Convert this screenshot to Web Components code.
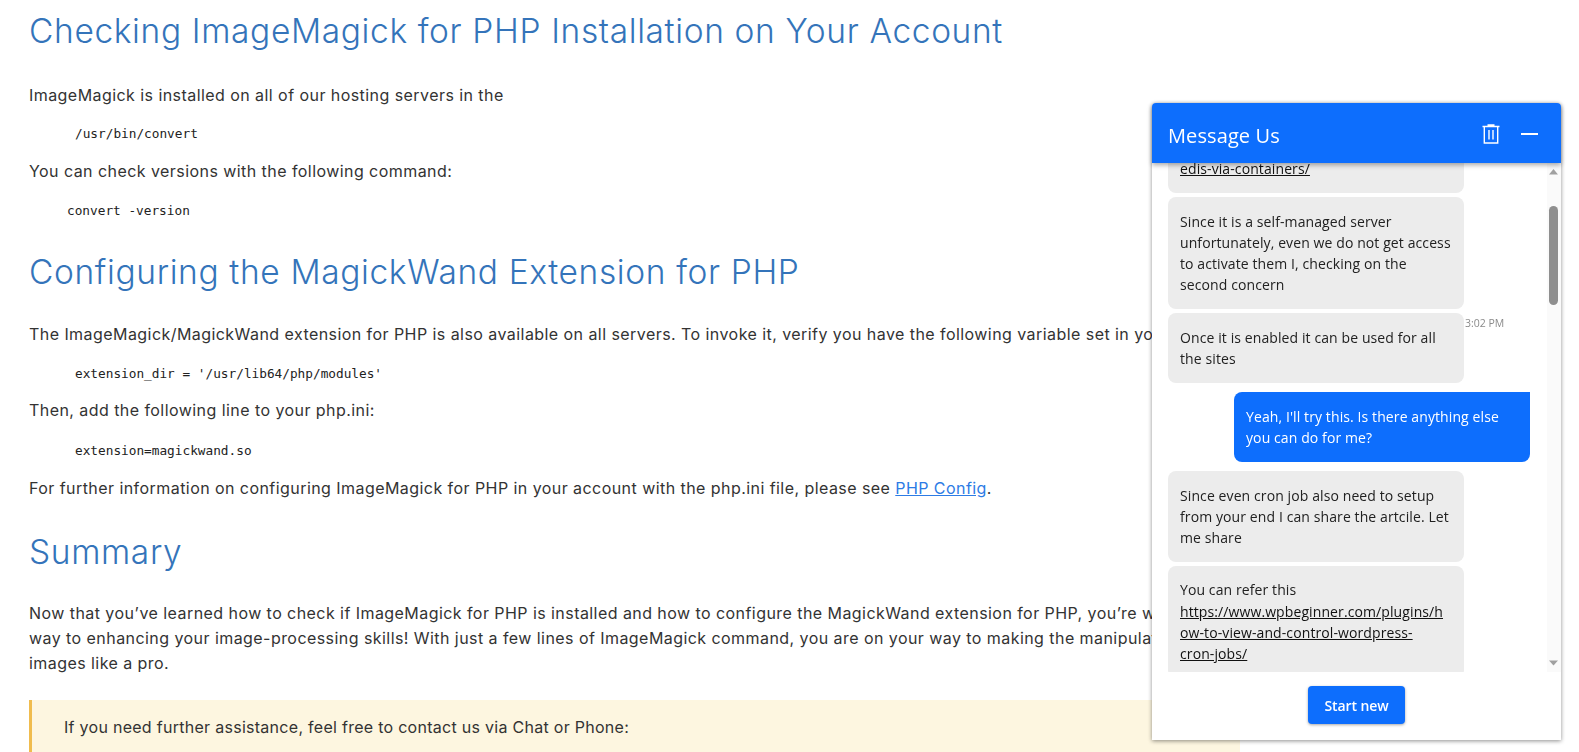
<!DOCTYPE html>
<html>
<head>
<meta charset="utf-8">
<title>ImageMagick for PHP</title>
<style>
    html, body { margin: 0; height: 752px; overflow: hidden; background: #fff; }
    body { font-family: "Inter", "Liberation Sans", sans-serif; color: #333; }
</style>
</head>
<body>
<kb-article>
    <kb-heading style="--top: 11px">Checking ImageMagick for PHP Installation on Your Account</kb-heading>
    <kb-para style="--top: 32px">ImageMagick is installed on all of our hosting servers in the</kb-para>
    <kb-code style="--indent: 46px; --pad-top: 19px">/usr/bin/convert</kb-code>
    <kb-para>You can check versions with the following command:</kb-para>
    <kb-code style="--indent: 38px; --pad-top: 20px; --pad-bottom: 18px">convert -version</kb-code>
    <kb-heading style="--top: 16px">Configuring the MagickWand Extension for PHP</kb-heading>
    <kb-para style="--top: 30px">The ImageMagick/MagickWand extension for PHP is also available on all servers. To invoke it, verify you have the following variable set in your php.ini:</kb-para>
    <kb-code style="--indent: 46px; --pad-top: 20px; --pad-bottom: 17px">extension_dir = '/usr/lib64/php/modules'</kb-code>
    <kb-para>Then, add the following line to your php.ini:</kb-para>
    <kb-code style="--indent: 46px; --pad-top: 21px; --pad-bottom: 18px">extension=magickwand.so</kb-code>
    <kb-para>For further information on configuring ImageMagick for PHP in your account with the php.ini file, please see <kb-link>PHP Config</kb-link>.</kb-para>
    <kb-heading style="--top: 31px">Summary</kb-heading>
    <kb-para style="--top: 29px">Now that you’ve learned how to check if ImageMagick for PHP is installed and how to configure the MagickWand extension for PHP, you’re well on your<br>way to enhancing your image-processing skills! With just a few lines of ImageMagick command, you are on your way to making the manipulation of<br>images like a pro.</kb-para>
    <kb-callout>If you need further assistance, feel free to contact us via Chat or Phone:</kb-callout>
</kb-article>

<chat-widget title-text="Message Us">
    <chat-bubble style="margin-top: -18.25px"><chat-link>edis-via-containers/</chat-link></chat-bubble>
    <chat-bubble>Since it is a self-managed server unfortunately, even we do not get access to activate them I, checking on the second concern</chat-bubble>
    <chat-bubble time="3:02 PM">Once it is enabled it can be used for all the sites</chat-bubble>
    <chat-bubble mine>Yeah, I'll try this. Is there anything else you can do for me?</chat-bubble>
    <chat-bubble>Since even cron job also need to setup from your end I can share the artcile. Let me share</chat-bubble>
    <chat-bubble>
        <div>You can refer this</div>
        <chat-link>https://www.wpbeginner.com/plugins/h</chat-link>
        <chat-link>ow-to-view-and-control-wordpress-</chat-link>
        <chat-link>cron-jobs/</chat-link>
    </chat-bubble>
</chat-widget>

<script>
class KbArticle extends HTMLElement {
    constructor() {
        super();
        this.attachShadow({ mode: 'open' });
        this.shadowRoot.innerHTML = `
            <style>
                :host { display: block; width: 1211px; padding-left: 29px; }
            </style>
            <slot></slot>
        `;
    }
}

class KbHeading extends HTMLElement {
    constructor() {
        super();
        this.attachShadow({ mode: 'open' });
        this.shadowRoot.innerHTML = `
            <style>
                :host {
                    display: block;
                    margin-top: var(--top, 0);
                    font-size: 33.5px;
                    line-height: 40px;
                    font-weight: 300;
                    letter-spacing: 0.63px;
                    color: #3474ba;
                    white-space: nowrap;
                }
            </style>
            <slot></slot>
        `;
    }
}

class KbPara extends HTMLElement {
    constructor() {
        super();
        this.attachShadow({ mode: 'open' });
        this.shadowRoot.innerHTML = `
            <style>
                :host {
                    display: block;
                    margin-top: var(--top, 0);
                    font-size: 16px;
                    line-height: 25px;
                    letter-spacing: 0.44px;
                    color: #333;
                    white-space: nowrap;
                }
            </style>
            <slot></slot>
        `;
    }
}

class KbCode extends HTMLElement {
    constructor() {
        super();
        this.attachShadow({ mode: 'open' });
        this.shadowRoot.innerHTML = `
            <style>
                :host {
                    display: block;
                    padding: var(--pad-top, 18px) 0 var(--pad-bottom, 18px) var(--indent, 46px);
                    font-family: "DejaVu Sans Mono", "Liberation Mono", monospace;
                    font-size: 12.75px;
                    line-height: 14px;
                    color: #222;
                }
            </style>
            <slot></slot>
        `;
    }
}

class KbLink extends HTMLElement {
    constructor() {
        super();
        this.attachShadow({ mode: 'open' });
        this.shadowRoot.innerHTML = `<style>
                :host { color: #2c7be5; text-decoration: underline; cursor: pointer; }
            </style><slot></slot>`;
    }
}

class KbCallout extends HTMLElement {
    constructor() {
        super();
        this.attachShadow({ mode: 'open' });
        this.shadowRoot.innerHTML = `
            <style>
                :host {
                    display: block;
                    margin-top: 24px;
                    padding: 15px 32px 12px;
                    border-left: 3px solid #f0bc4e;
                    background: #fdf6e0;
                    font-size: 16px;
                    line-height: 25px;
                    letter-spacing: 0.28px;
                    color: #333;
                }
            </style>
            <slot></slot>
        `;
    }
}

class ChatWidget extends HTMLElement {
    constructor() {
        super();
        this.attachShadow({ mode: 'open' });
        this.shadowRoot.innerHTML = `
            <style>
                :host {
                    position: fixed;
                    top: 103px;
                    right: 18px;
                    width: 409px;
                    height: 637px;
                    display: flex;
                    flex-direction: column;
                    background: #fff;
                    border-radius: 4px 4px 0 0;
                    box-shadow: 0 1px 4px rgba(0,0,0,0.45);
                    font-family: "Open Sans", "Liberation Sans", sans-serif;
                }
                header {
                    flex: 0 0 60px;
                    display: flex;
                    align-items: center;
                    padding: 0 23px 0 16px;
                    background: #0d6efd;
                    color: #fff;
                    border-radius: 4px 4px 0 0;
                    box-shadow: 0 2px 5px rgba(0,0,0,0.35);
                    position: relative;
                    z-index: 1;
                }
                h1 { flex: 1; margin: 5px 0 0; font-size: 20px; line-height: 26px; font-weight: 400; letter-spacing: 0.1px; }
                header svg { display: block; }
                .actions { display: flex; align-items: center; gap: 21px; }
                .trash { margin-top: 1px; }
                .dash { margin-top: 1px; }
                .body { flex: 0 0 509px; display: flex; min-height: 0; }
                .list {
                    flex: 1;
                    min-width: 0;
                    overflow: hidden;
                    display: flex;
                    flex-direction: column;
                    align-items: flex-start;
                    gap: 4px;
                    padding: 0 17px 0 16px;
                }
                footer { flex: 1; display: flex; justify-content: center; align-items: center; padding-bottom: 2px; }
                button {
                    width: 97px;
                    height: 38px;
                    border: 0;
                    border-radius: 4px;
                    background: #0d6efd;
                    color: #fff;
                    font: 600 14px "Open Sans", "Liberation Sans", sans-serif;
                    letter-spacing: -0.1px;
                    box-shadow: 0 1px 3px rgba(0,0,0,0.35);
                    padding: 0;
                }
            </style>
            <header>
                <h1>${this.getAttribute('title-text')}</h1>
                <div class="actions">
                    <svg class="trash" width="18" height="20" viewBox="0 0 18 20" fill="none" stroke="#fff" stroke-width="1.4">
                        <path d="M0.5 2.5H17.5M5.5 1H12.5M2.3 2.5V19H15.7V2.5M7 6V15.5M11 6V15.5"/>
                    </svg>
                    <svg class="dash" width="17" height="2" viewBox="0 0 17 2"><rect width="17" height="2" fill="#fff"/></svg>
                </div>
            </header>
            <div class="body">
                <div class="list"><slot></slot></div>
                <chat-scrollbar></chat-scrollbar>
            </div>
            <footer><button>Start new</button></footer>
        `;
    }
}

class ChatBubble extends HTMLElement {
    constructor() {
        super();
        this.attachShadow({ mode: 'open' });
        const time = this.getAttribute('time');
        this.shadowRoot.innerHTML = `
            <style>
                :host { display: flex; align-items: flex-start; flex: none; }
                :host([mine]) { align-self: flex-end; margin: 5.5px 0; }
                .bubble {
                    box-sizing: border-box;
                    width: 296px;
                    padding: 13.5px 12px;
                    border-radius: 8px;
                    background: #ececec;
                    color: #212121;
                    font-size: 14px;
                    line-height: 21.25px;
                    letter-spacing: 0.1px;
                    overflow-wrap: anywhere;
                }
                :host([mine]) .bubble { background: #0d6efd; color: #fff; border-top-right-radius: 0; }
                .time { margin: 3px 0 0 1px; font-size: 10.5px; line-height: 14px; color: #8a8a8a; white-space: nowrap; }
            </style>
            <div class="bubble"><slot></slot></div>
            ${time ? `<span class="time">${time}</span>` : ''}
        `;
    }
}

class ChatLink extends HTMLElement {
    constructor() {
        super();
        this.attachShadow({ mode: 'open' });
        this.shadowRoot.innerHTML = `<style>
                :host { display: block; color: #111; text-decoration: underline; }
            </style><slot></slot>`;
    }
}

class ChatScrollbar extends HTMLElement {
    constructor() {
        super();
        this.attachShadow({ mode: 'open' });
        this.shadowRoot.innerHTML = `
            <style>
                :host {
                    flex: 0 0 14px;
                    display: flex;
                    flex-direction: column;
                    align-items: center;
                    background: #fafafa;
                }
                svg { display: block; flex: none; }
                .track { flex: 1; }
                .thumb { width: 9px; height: 99px; margin: 30px 0 0 -1px; border-radius: 5px; background: #8f8f8f; }
            </style>
            <svg width="14" height="13" viewBox="0 0 14 13"><path d="M2 11.5L6.5 6L11 11.5Z" fill="#a0a0a0"/></svg>
            <div class="track"><div class="thumb"></div></div>
            <svg width="14" height="13" viewBox="0 0 14 13" style="margin-bottom:2px"><path d="M2 3.5H11L6.5 8.5Z" fill="#a0a0a0"/></svg>
        `;
    }
}

customElements.define('kb-article', KbArticle);
customElements.define('kb-heading', KbHeading);
customElements.define('kb-para', KbPara);
customElements.define('kb-code', KbCode);
customElements.define('kb-link', KbLink);
customElements.define('kb-callout', KbCallout);
customElements.define('chat-widget', ChatWidget);
customElements.define('chat-bubble', ChatBubble);
customElements.define('chat-link', ChatLink);
customElements.define('chat-scrollbar', ChatScrollbar);
</script>
</body>
</html>
